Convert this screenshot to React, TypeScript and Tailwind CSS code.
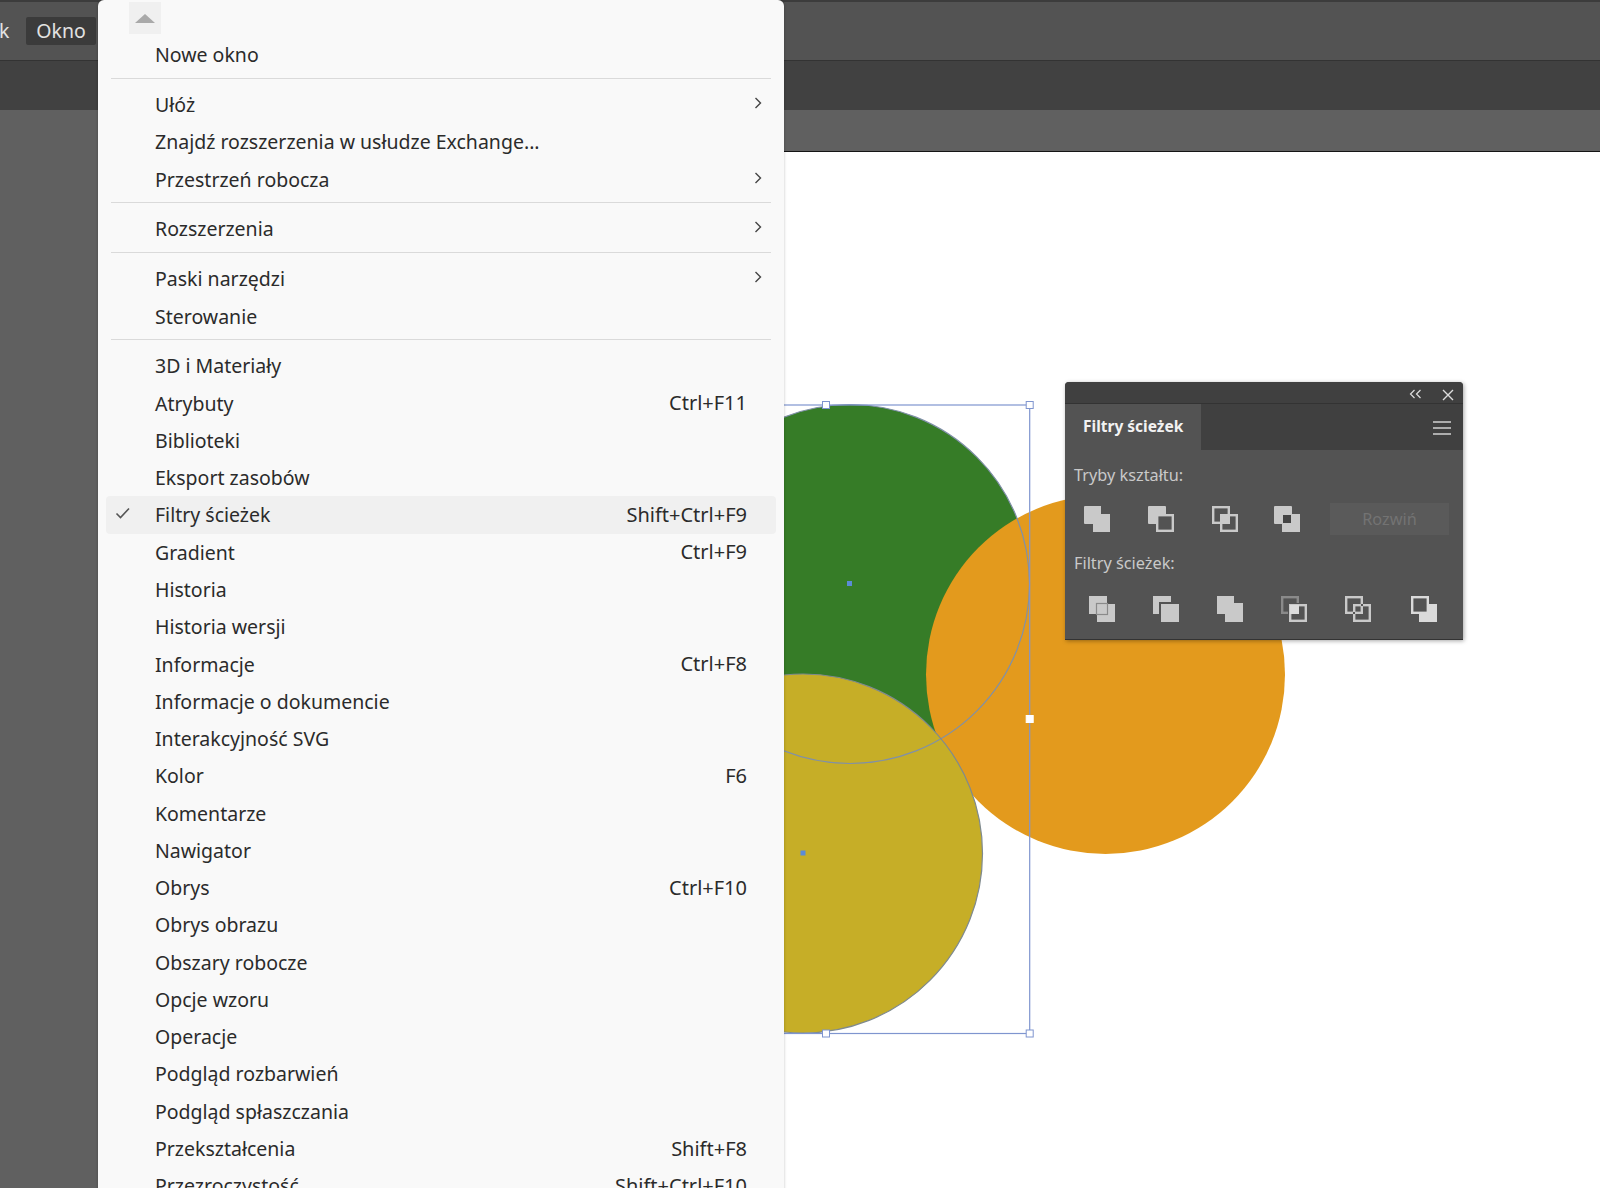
const groups: { label: string; shortcut?: string; sub?: boolean; checked?: boolean }[][] = [
  [{ label: "Nowe okno" }],
  [
    { label: "Ułóż", sub: true },
    { label: "Znajdź rozszerzenia w usłudze Exchange..." },
    { label: "Przestrzeń robocza", sub: true },
  ],
  [{ label: "Rozszerzenia", sub: true }],
  [{ label: "Paski narzędzi", sub: true }, { label: "Sterowanie" }],
  [
    { label: "3D i Materiały" },
    { label: "Atrybuty", shortcut: "Ctrl+F11" },
    { label: "Biblioteki" },
    { label: "Eksport zasobów" },
    { label: "Filtry ścieżek", shortcut: "Shift+Ctrl+F9", checked: true },
    { label: "Gradient", shortcut: "Ctrl+F9" },
    { label: "Historia" },
    { label: "Historia wersji" },
    { label: "Informacje", shortcut: "Ctrl+F8" },
    { label: "Informacje o dokumencie" },
    { label: "Interakcyjność SVG" },
    { label: "Kolor", shortcut: "F6" },
    { label: "Komentarze" },
    { label: "Nawigator" },
    { label: "Obrys", shortcut: "Ctrl+F10" },
    { label: "Obrys obrazu" },
    { label: "Obszary robocze" },
    { label: "Opcje wzoru" },
    { label: "Operacje" },
    { label: "Podgląd rozbarwień" },
    { label: "Podgląd spłaszczania" },
    { label: "Przekształcenia", shortcut: "Shift+F8" },
    { label: "Przezroczystość", shortcut: "Shift+Ctrl+F10" },
  ],
];

const ink = "#c9c9c9";
const bg = "#535353";

// each panel icon is two overlapping squares, back one top-left, front one bottom-right
function ShapeIcon({ kind }: { kind: string }) {
  const back = { x: 1.2, y: 1.2, width: 15.6, height: 15.6 };
  const front = { x: 9.2, y: 9.2, width: 15.6, height: 15.6 };
  const overlap = { x: 9, y: 9, width: 8, height: 8 };
  const line = { fill: "none", stroke: ink, strokeWidth: 2.4 };
  return (
    <svg width="26" height="26" viewBox="0 0 26 26" className="shrink-0">
      {kind === "unite" && (
        <path d="M0 1a1 1 0 0 1 1-1h16v8h9v18H9v-8H1a1 1 0 0 1-1-1z" fill={ink} />
      )}
      {kind === "front" && (
        <>
          <rect x="0" y="0" width="18" height="18" rx="1" fill={ink} />
          <rect {...front} fill={bg} stroke={ink} strokeWidth="2.4" />
        </>
      )}
      {kind === "intersect" && (
        <>
          <rect {...back} {...line} />
          <rect {...front} {...line} />
          <rect {...overlap} fill={ink} />
        </>
      )}
      {kind === "exclude" && (
        <>
          <rect x="0" y="0" width="18" height="18" rx="1" fill={ink} />
          <rect x="8" y="8" width="18" height="18" fill={ink} />
          <rect x="9" y="9" width="8" height="8" fill="#444" />
        </>
      )}
      {kind === "divide" && (
        <>
          <rect x="0" y="0" width="18" height="18" fill={ink} />
          <rect x="8" y="8" width="18" height="18" fill={ink} />
          <rect x="7.5" y="7.5" width="11" height="11" fill="none" stroke="#8a8a8a" strokeWidth="1.2" />
        </>
      )}
      {kind === "trim" && (
        <>
          <rect x="0" y="0" width="18" height="18" fill={ink} />
          <rect x="6" y="6" width="20" height="20" fill={bg} />
          <rect x="8" y="8" width="18" height="18" fill={ink} />
        </>
      )}
      {kind === "merge" && (
        <path d="M0 0h17v7h9v19H8v-8H0z" fill={ink} />
      )}
      {kind === "crop" && (
        <>
          <rect {...back} fill="none" stroke="#8a8a8a" strokeWidth="2.4" />
          <rect x="7" y="7" width="12" height="12" fill={bg} />
          <rect {...front} {...line} />
          <rect x="9" y="9" width="9" height="9" fill="#dcdcdc" />
        </>
      )}
      {kind === "outline" && (
        <>
          <rect {...back} {...line} />
          <rect {...front} {...line} />
          <rect x="16" y="8" width="2" height="2" fill={bg} />
          <rect x="8" y="16" width="2" height="2" fill={bg} />
        </>
      )}
      {kind === "minusBack" && (
        <>
          <rect x="8" y="8" width="18" height="18" fill="#dadada" />
          <rect {...back} fill={bg} stroke="#dadada" strokeWidth="2.4" />
        </>
      )}
    </svg>
  );
}

function Menu() {
  return (
    <div className="absolute left-[98px] top-0 w-[686px] h-[1200px] bg-[#f9f9f9] rounded-t-[6px] shadow-[0_0_3px_rgba(0,0,0,0.25)] font-['Noto_Sans',sans-serif] text-[19.5px] text-[#2b2b2b]">
      <div className="h-[36.2px] pl-[31px] pt-[2px]">
        <div className="w-[32px] h-[32px] bg-[#f0f0f0] flex items-center justify-center">
          <div className="w-0 h-0 border-x-[10px] border-x-transparent border-b-[9px] border-b-[#a9a9a9]" />
        </div>
      </div>
      {groups.map((group, i) => (
        <div key={i}>
          {i > 0 && (
            <div className="h-[12.6px] pt-[4.5px] px-[13px]">
              <div className="h-px bg-[#dadada]" />
            </div>
          )}
          {group.map((item) => (
            <div
              key={item.label}
              className={
                item.checked
                  ? "relative h-[37.27px] mx-[8px] pl-[49px] pr-[29px] flex items-center justify-between bg-[#f0f0f0] rounded-[4px]"
                  : "relative h-[37.27px] mx-[8px] pl-[49px] pr-[29px] flex items-center justify-between"
              }
            >
              {item.checked && (
                <svg width="16" height="12" viewBox="0 0 16 12" className="absolute left-[9px] top-[11px]">
                  <path d="M1.5 6.5 5.5 10.5 14 1.5" fill="none" stroke="#555" strokeWidth="1.6" />
                </svg>
              )}
              <span className="whitespace-nowrap">{item.label}</span>
              {item.shortcut && <span className="whitespace-nowrap text-[20px]">{item.shortcut}</span>}
              {item.sub && (
                <svg width="8" height="12" viewBox="0 0 8 12" className="absolute right-[14px] top-[11px]">
                  <path d="M1.5 1 6.5 6 1.5 11" fill="none" stroke="#444" strokeWidth="1.4" />
                </svg>
              )}
            </div>
          ))}
        </div>
      ))}
    </div>
  );
}

function Handle({ x, y, filled }: { x: number; y: number; filled?: boolean }) {
  return <rect x={x - 3.5} y={y - 3.5} width="7" height="7" fill="#fff" stroke={filled ? "#fff" : "#7f95cf"} strokeWidth="1" />;
}

function Artwork() {
  return (
    <svg viewBox="784 152 816 1036" width="816" height="1036" className="block">
      <circle cx="850" cy="584" r="179.5" fill="#367c27" />
      <circle cx="1105.5" cy="674.5" r="179.5" fill="#e39a1d" />
      <circle cx="803" cy="853.5" r="179.5" fill="#c6ae27" />
      <circle cx="850" cy="584" r="179.5" fill="none" stroke="#8090a8" strokeWidth="1.2" />
      <circle cx="803" cy="853.5" r="179.5" fill="none" stroke="#7f8a8f" strokeWidth="1.2" />
      <rect x="623" y="405" width="406.7" height="628.5" fill="none" stroke="#7f95cf" strokeWidth="1.2" />
      <Handle x={826} y={405} />
      <Handle x={1029.7} y={405} />
      <Handle x={1029.7} y={719} filled />
      <Handle x={826} y={1033.5} />
      <Handle x={1029.7} y={1033.5} />
      <rect x="847" y="581" width="5" height="5" fill="#5b8bd6" />
      <rect x="800.5" y="850.5" width="5" height="5" fill="#5b8bd6" />
    </svg>
  );
}

function Panel() {
  return (
    <div className="absolute left-[1065px] top-[382px] w-[398px] h-[258px] flex flex-col bg-[#535353] rounded-t-[4px] overflow-hidden border-b border-[#333] shadow-[1px_1px_4px_rgba(0,0,0,0.35)] font-['Noto_Sans',sans-serif] text-[16.3px] text-[#c9c9c9]">
      <div className="h-[22px] shrink-0 bg-[#404040] border-b border-[#333] flex items-center justify-end gap-[20px] pr-[9px] pt-[4px]">
        <svg width="13" height="10" viewBox="0 0 13 10" className="-mt-[2px]">
          <path d="M5.5 1 1.5 5 5.5 9M11.5 1 7.5 5 11.5 9" fill="none" stroke="#ddd" strokeWidth="1.2" />
        </svg>
        <svg width="12" height="12" viewBox="0 0 12 12">
          <path d="M1 1 11 11M11 1 1 11" fill="none" stroke="#ddd" strokeWidth="1.4" />
        </svg>
      </div>
      <div className="h-[46px] shrink-0 flex bg-[#404040]">
        <div className="w-[136px] bg-[#535353] flex items-center pl-[18px] font-bold text-[15.5px] text-[#f2f2f2]">Filtry ścieżek</div>
        <div className="flex-1 flex items-center justify-end pr-[12px] pt-[2px]">
          <div className="flex flex-col gap-[4px]">
            <div className="w-[18px] h-[2px] bg-[#adadad]" />
            <div className="w-[18px] h-[2px] bg-[#adadad]" />
            <div className="w-[18px] h-[2px] bg-[#adadad]" />
          </div>
        </div>
      </div>
      <div className="flex-1 pl-[9px] pt-[14px]">
        <div className="leading-[22px]">Tryby kształtu:</div>
        <div className="flex items-center mt-[17px] pl-[10px] h-[32px]">
          <div className="flex gap-[38px]">
            <ShapeIcon kind="unite" />
            <ShapeIcon kind="front" />
            <ShapeIcon kind="intersect" />
            <div className="-ml-[2px]">
              <ShapeIcon kind="exclude" />
            </div>
          </div>
          <div className="ml-[30px] w-[119px] h-[32px] bg-[#5a5a5a] flex items-center justify-center text-[#737373]">Rozwiń</div>
        </div>
        <div className="leading-[22px] mt-[17px]">Filtry ścieżek:</div>
        <div className="flex gap-[38px] mt-[22px] pl-[15px]">
          {["divide", "trim", "merge", "crop", "outline"].map((k) => (
            <ShapeIcon key={k} kind={k} />
          ))}
          <div className="ml-[2px]">
            <ShapeIcon kind="minusBack" />
          </div>
        </div>
      </div>
    </div>
  );
}

export default function App() {
  return (
    <div className="relative w-[1600px] h-[1188px] overflow-hidden flex flex-col bg-[#606060]">
      <div className="h-[60px] shrink-0 bg-[#535353] border-t-2 border-[#3c3c3c] flex items-center font-['Noto_Sans',sans-serif] text-[19.5px] text-[#e2e2e2]">
        <span className="w-[26px] leading-none -indent-[1px]">k</span>
        <div className="w-[70px] h-[28px] bg-[#3b3b3b] rounded-[2px] flex items-center justify-center">Okno</div>
      </div>
      <div className="h-[50px] shrink-0 bg-[#414141] border-t border-[#333]" />
      <div className="h-[42px] shrink-0 flex">
        <div className="w-[784px] shrink-0" />
        <div className="flex-1 border-b border-[#141414]" />
      </div>
      <div className="flex-1 flex min-h-0">
        <div className="w-[784px] shrink-0" />
        <div className="flex-1 bg-white overflow-hidden">
          <Artwork />
        </div>
      </div>
      <Menu />
      <Panel />
    </div>
  );
}
